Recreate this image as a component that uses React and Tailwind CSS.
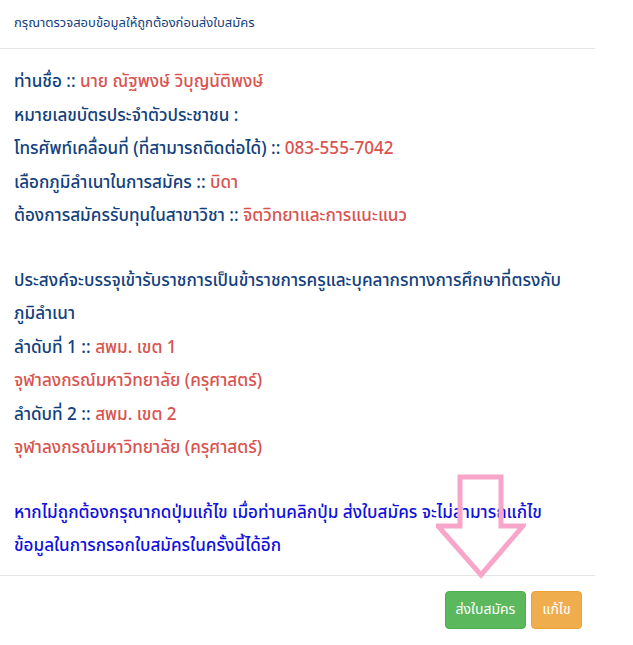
export default function App() {
  const font = { fontFamily: '"Noto Sans Thai", "Noto Sans", "DejaVu Sans", sans-serif' };
  return (
    <div className="w-[633px] h-[645px] bg-white overflow-hidden" style={font}>
      <div className="w-[595px] bg-white">
        <div className="h-[49px] px-[14px] flex items-center border-b border-[#e5e5e5]">
          <h4 className="text-[13px] text-[#12407c]">กรุณาตรวจสอบข้อมูลให้ถูกต้องก่อนส่งใบสมัคร</h4>
        </div>

        <div className="px-[14px] pt-[17px] pb-[11px] text-[17.1px] font-medium leading-[33.5px] text-[#12407c]">
          <div>
            ท่านชื่อ :: <span className="text-[#d9534f]">นาย ณัฐพงษ์ วิบุญนัติพงษ์</span>
          </div>
          <div>หมายเลขบัตรประจำตัวประชาชน :</div>
          <div>
            โทรศัพท์เคลื่อนที่ (ที่สามารถติดต่อได้) :: <span className="text-[#d9534f]">083-555-7042</span>
          </div>
          <div>
            เลือกภูมิลำเนาในการสมัคร :: <span className="text-[#d9534f]">บิดา</span>
          </div>
          <div>
            ต้องการสมัครรับทุนในสาขาวิชา :: <span className="text-[#d9534f]">จิตวิทยาและการแนะแนว</span>
          </div>

          <div className="mt-[31px]">ประสงค์จะบรรจุเข้ารับราชการเป็นข้าราชการครูและบุคลากรทางการศึกษาที่ตรงกับ</div>
          <div>ภูมิลำเนา</div>
          <div>
            ลำดับที่ 1 :: <span className="text-[#d9534f]">สพม. เขต 1</span>
          </div>
          <div className="text-[#d9534f]">จุฬาลงกรณ์มหาวิทยาลัย (ครุศาสตร์)</div>
          <div>
            ลำดับที่ 2 :: <span className="text-[#d9534f]">สพม. เขต 2</span>
          </div>
          <div className="text-[#d9534f]">จุฬาลงกรณ์มหาวิทยาลัย (ครุศาสตร์)</div>

          <div className="mt-[31px] text-[#1010dd]">
            <div>หากไม่ถูกต้องกรุณากดปุ่มแก้ไข เมื่อท่านคลิกปุ่ม ส่งใบสมัคร จะไม่สามารถแก้ไข</div>
            <div>ข้อมูลในการกรอกใบสมัครในครั้งนี้ได้อีก</div>
          </div>
        </div>

        <div className="border-t border-[#e5e5e5] pt-[15px] pr-[13px] flex justify-end gap-[5px]">
          <button className="w-[81px] h-[38px] rounded-[4px] bg-[#5cb85c] border border-[#4cae4c] text-white text-[14px]">
            ส่งใบสมัคร
          </button>
          <button className="w-[51px] h-[38px] rounded-[4px] bg-[#f0ad4e] border border-[#eea236] text-white text-[14px]">
            แก้ไข
          </button>
        </div>
      </div>

      <svg className="absolute left-[436px] top-[474px]" width="90" height="106" viewBox="0 0 90 106">
        <polygon
          points="24,3 65,3 65,52 87,52 45,101 2,52 24,52"
          fill="none"
          stroke="#f7a6c9"
          strokeWidth="5"
          strokeLinejoin="miter"
        />
      </svg>
    </div>
  );
}
